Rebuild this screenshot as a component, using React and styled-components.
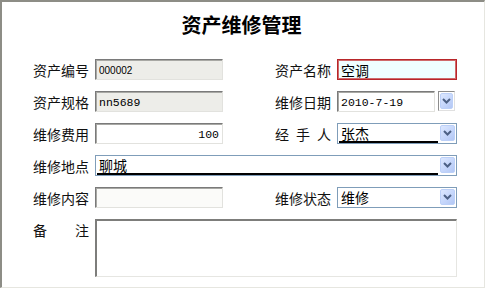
import React from 'react';
import styled, { createGlobalStyle, css } from 'styled-components';

const GlobalStyle = createGlobalStyle`
  html, body {
    margin: 0;
    padding: 0;
    background: #fff;
  }
  body {
    font-family: "Noto Sans CJK SC", "Liberation Sans", sans-serif;
  }
`;

const Frame = styled.div`
  box-sizing: border-box;
  width: 485px;
  height: 288px;
  border-top: 2px solid #8d8d86;
  border-left: 2px solid #8d8d86;
  border-right: 1px solid #e6e6e0;
  border-bottom: 1px solid #e6e6e0;
  background: #fff;
`;

const Title = styled.h1`
  box-sizing: border-box;
  margin: 0;
  height: 57px;
  padding-top: 11px;
  padding-right: 3px;
  font-size: 20px;
  line-height: 24px;
  font-weight: bold;
  text-align: center;
  color: #000;
`;

const Form = styled.div`
  display: grid;
  padding-left: 31px;
  grid-template-columns: 56px 128px 40px 56px 120px;
  grid-template-rows: repeat(5, 21px) 58px;
  column-gap: 6px;
  row-gap: 11px;
`;

const Label = styled.div`
  grid-column: ${(p) => (p.right ? 4 : 1)};
  align-self: ${(p) => (p.top ? 'start' : 'center')};
  padding-top: ${(p) => (p.top ? '2px' : '0')};
  font-size: 14px;
  line-height: 18px;
  color: #111;
  white-space: nowrap;
  text-align: justify;
  text-align-last: justify;
`;

const insetBorder = css`
  border-style: solid;
  border-width: 1px;
  border-color: #7a7a7a #e2e2de #e2e2de #7a7a7a;
  box-shadow: inset 1px 1px 0 #a8a8a4;
`;

const TextBox = styled.div`
  box-sizing: border-box;
  grid-column: ${(p) => p.col || 2};
  display: flex;
  align-items: center;
  justify-content: ${(p) => (p.alignRight ? 'flex-end' : 'flex-start')};
  height: 21px;
  padding: 1px 3px 0 3px;
  font-size: 12px;
  color: #000;
  overflow: hidden;
  white-space: nowrap;
  ${insetBorder};
  background: ${(p) => p.bg || '#fff'};
  ${(p) =>
    p.required &&
    css`
      border: 1px solid #b8262a;
      box-shadow: inset 0 0 0 1px #d06a6a;
      background: #efffff;
    `}
`;

const Mono = styled.span`
  font-family: "Liberation Mono", "DejaVu Sans Mono", monospace;
  font-size: 11.5px;
`;

const Narrow = styled.span`
  font-family: "Liberation Sans", Arial, sans-serif;
  font-size: 10px;
`;

const Han = styled.span`
  font-size: 14px;
  line-height: 16px;
`;

const DateField = styled.div`
  grid-column: 5;
  display: flex;
  gap: 3px;
  height: 21px;
  padding-right: 2px;
`;

const DateBox = styled(TextBox)`
  flex: 1;
`;

const DropButton = styled.div`
  box-sizing: border-box;
  width: 17px;
  height: 20px;
  display: flex;
  align-items: center;
  justify-content: center;
  border: 1px solid #8d8d8d;
  border-right-color: #e0e0e0;
  border-bottom-color: #e0e0e0;
  padding: 1px;
`;

const ArrowFace = styled.div`
  box-sizing: border-box;
  width: ${(p) => p.w || 15}px;
  height: ${(p) => p.h || 16}px;
  display: flex;
  align-items: center;
  justify-content: center;
  border: 1px solid #bcd0f8;
  border-radius: 2px;
  background: linear-gradient(135deg, #dde8ff 0%, #c5d6fb 55%, #b3c7f4 100%);
`;

const Select = styled.div`
  box-sizing: border-box;
  grid-column: ${(p) => (p.wide ? '2 / 6' : 5)};
  display: flex;
  align-items: stretch;
  height: 21px;
  border: 1px solid #7f9db9;
  background: #fff;
  padding: 1px 1px 1px 1px;
  gap: 2px;
`;

const SelectValue = styled.div`
  flex: 1;
  display: flex;
  align-items: flex-end;
  padding-left: 2px;
  font-size: 14px;
  line-height: 15px;
  color: #000;
  border-bottom: ${(p) => (p.underline ? '2px solid #000' : '2px solid transparent')};
  margin-bottom: -1px;
`;

const NoteArea = styled.div`
  box-sizing: border-box;
  grid-column: 2 / 6;
  height: 58px;
  border-style: solid;
  border-width: 2px 1px 1px 2px;
  border-color: #7d7d7b #e6e6e2 #e6e6e2 #7d7d7b;
  background: #fff;
`;

const Chevron = () => (
  <svg width="9" height="6" viewBox="0 0 9 6">
    <path d="M1 1 L4.5 4.5 L8 1" fill="none" stroke="#4d6185" strokeWidth="2" />
  </svg>
);

export default function App() {
  return (
    <>
      <GlobalStyle />
      <Frame>
        <Title>资产维修管理</Title>
        <Form>
          <Label>资产编号</Label>
          <TextBox bg="#edede9">
            <Narrow>000002</Narrow>
          </TextBox>
          <Label right>资产名称</Label>
          <TextBox col={5} required>
            <Han>空调</Han>
          </TextBox>

          <Label>资产规格</Label>
          <TextBox bg="#edede9">
            <Mono>nn5689</Mono>
          </TextBox>
          <Label right>维修日期</Label>
          <DateField>
            <DateBox>
              <Mono>2010-7-19</Mono>
            </DateBox>
            <DropButton>
              <ArrowFace w={13} h={16}>
                <Chevron />
              </ArrowFace>
            </DropButton>
          </DateField>

          <Label>维修费用</Label>
          <TextBox alignRight>
            <Mono>100</Mono>
          </TextBox>
          <Label right>经手人</Label>
          <Select>
            <SelectValue underline>张杰</SelectValue>
            <ArrowFace>
              <Chevron />
            </ArrowFace>
          </Select>

          <Label>维修地点</Label>
          <Select wide>
            <SelectValue underline>聊城</SelectValue>
            <ArrowFace>
              <Chevron />
            </ArrowFace>
          </Select>

          <Label>维修内容</Label>
          <TextBox bg="#fbfbf9" />
          <Label right>维修状态</Label>
          <Select>
            <SelectValue>维修</SelectValue>
            <ArrowFace>
              <Chevron />
            </ArrowFace>
          </Select>

          <Label top>备注</Label>
          <NoteArea />
        </Form>
      </Frame>
    </>
  );
}
